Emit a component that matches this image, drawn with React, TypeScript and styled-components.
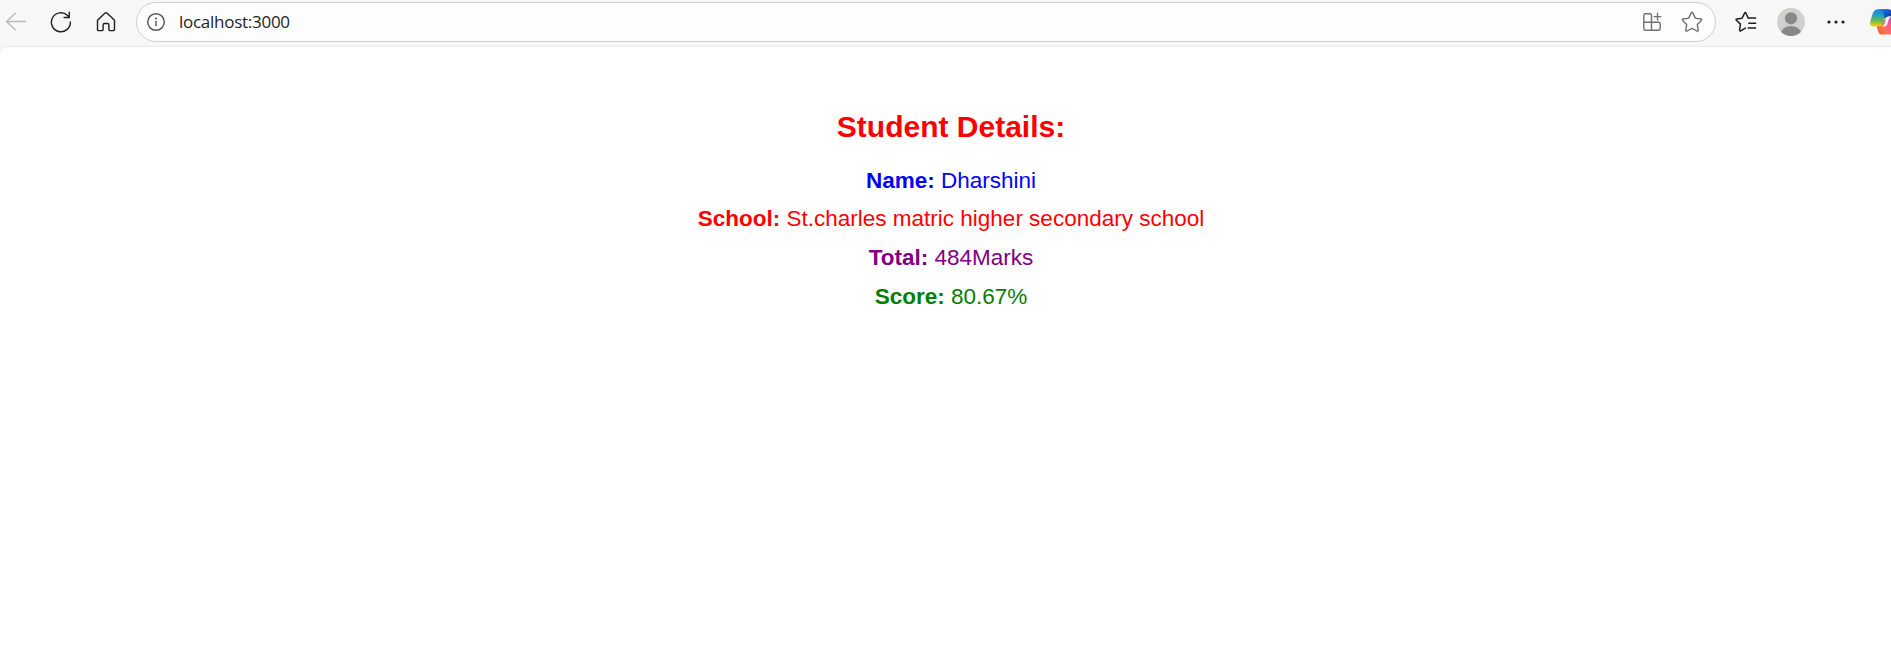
import React from "react";
import styled, { createGlobalStyle } from "styled-components";

const GlobalStyle = createGlobalStyle`
  html, body { margin: 0; padding: 0; background: #f7f7f7; overflow: hidden; }
  *, *::before, *::after { box-sizing: border-box; }
`;

const Window = styled.div`
  display: flex;
  flex-direction: column;
  height: 651px;
  width: 100%;
  overflow: hidden;
  background: #f7f7f7;
`;

const Toolbar = styled.header`
  display: flex;
  align-items: center;
  flex: none;
  height: 46px;
  padding: 0 0 2px 5px;
`;

const IconButton = styled.button<{ $gap?: number; $color?: string }>`
  display: flex;
  flex: none;
  padding: 0;
  border: 0;
  background: none;
  color: ${(p) => p.$color ?? "#1f1f1f"};
  margin-left: ${(p) => p.$gap ?? 0}px;

  svg { display: block; }
`;

const AddressBar = styled.div`
  display: flex;
  align-items: center;
  width: 1580px;
  height: 40px;
  flex: none;
  margin-left: 19px;
  padding: 0 12px 0 9px;
  border: 1px solid #cecece;
  border-radius: 20px;
  background: #fdfdfd;
`;

const Url = styled.span`
  flex: 1;
  margin-left: 13px;
  color: #1f1f1f;
  font: 400 17px/24px "Open Sans", "Noto Sans", sans-serif;
  letter-spacing: -0.27px;
`;

const Page = styled.main`
  flex: 1;
  padding: 62.5px 0 0 11px;
  border-top: 1px solid #e9e9e9;
  border-top-left-radius: 8px;
  background: #fff;
  font-family: Arial, "Liberation Sans", sans-serif;
  text-align: center;
`;

const Heading = styled.h1`
  margin: 0 0 18.3px;
  color: #ff0000;
  font-size: 30px;
  line-height: 34px;
`;

const Detail = styled.p<{ $color: string }>`
  margin: 0;
  color: ${(p) => p.$color};
  font-size: 22.5px;
  line-height: 38.6px;
`;

const stroke = {
  fill: "none",
  stroke: "currentColor",
  strokeWidth: 1.4,
  strokeLinecap: "round" as const,
  strokeLinejoin: "round" as const,
};

const BackIcon = () => (
  <svg width="22" height="22" viewBox="0 0 22 22" {...stroke}>
    <path d="M20.5 10.5H1.5M10.3 2.3 1.5 10.5l8.8 8.3" />
  </svg>
);

const RefreshIcon = () => (
  <svg width="22" height="22" viewBox="0 0 22 22" {...stroke}>
    <path d="M20.4 11A9.5 9.5 0 1 1 17.4 4.3L19.3 6.4M19.3 1.3v5.2h-5.2" />
  </svg>
);

const HomeIcon = () => (
  <svg width="22" height="22" viewBox="0 0 22 22" {...stroke}>
    <path d="M2.5 9.2 10.1 2.1a1.3 1.3 0 0 1 1.8 0l7.6 7.1v9.2a1.2 1.2 0 0 1-1.2 1.2h-3.2a1.2 1.2 0 0 1-1.2-1.2V14a1.5 1.5 0 0 0-1.5-1.5H9.6A1.5 1.5 0 0 0 8.1 14v4.4a1.2 1.2 0 0 1-1.2 1.2H3.7a1.2 1.2 0 0 1-1.2-1.2z" />
  </svg>
);

const InfoIcon = () => (
  <svg width="20" height="20" viewBox="0 0 20 20" {...stroke}>
    <circle cx="10" cy="10" r="8.3" strokeWidth="1.5" />
    <path d="M10 9.4v4" strokeWidth="1.5" />
    <circle cx="10" cy="6.5" r="1" fill="currentColor" stroke="none" />
  </svg>
);

const AppsIcon = () => (
  <svg width="20" height="20" viewBox="0 0 20 20" {...stroke}>
    <path d="M9.5 10.3V3.4a1.6 1.6 0 0 0-1.6-1.6H3.4a1.6 1.6 0 0 0-1.6 1.6v13.2a1.6 1.6 0 0 0 1.6 1.6h13.2a1.6 1.6 0 0 0 1.6-1.6v-4.7a1.6 1.6 0 0 0-1.6-1.6H1.8M9.5 10.3v7.9M12.1 4.6h6.8M15.5 1.2v6.8" />
  </svg>
);

const StarIcon = () => (
  <svg width="22" height="22" viewBox="0 0 22 22" {...stroke}>
    <path d="M10.2 1.9q.8-1.3 1.6 0l2.5 5.2 5.5.9q1.5.3.5 1.4l-4 4 .9 5.7q.1 1.5-1.3.9L11 17.4 6.1 20q-1.4.6-1.3-.9l.9-5.7-4-4Q.7 8.3 2.2 8l5.5-.9z" />
  </svg>
);

const FavoritesIcon = () => (
  <svg width="22" height="22" viewBox="0 0 22 22" {...stroke} strokeWidth={1.5}>
    <path d="M13.2 7.1 11 2.2q-.7-1.3-1.4 0L7.1 7.2l-5.2.7q-1.4.3-.5 1.3l4 3.9-.8 6q0 1.3 1.2.7l4.5-2.7M13.2 7.1h7.4M13.8 12.3h6.8M13.2 17.1h7.4" />
  </svg>
);

const Avatar = () => (
  <svg width="28" height="28" viewBox="0 0 28 28">
    <defs>
      <clipPath id="avatar-clip"><circle cx="14" cy="14" r="14" /></clipPath>
    </defs>
    <g clipPath="url(#avatar-clip)">
      <rect width="28" height="28" fill="#d2d0ce" />
      <circle cx="14" cy="10.3" r="6.1" fill="#8a8886" />
      <ellipse cx="14" cy="26" rx="10.2" ry="8" fill="#8a8886" />
    </g>
  </svg>
);

const MoreIcon = () => (
  <svg width="18" height="6" viewBox="0 0 18 6" fill="currentColor">
    <circle cx="2" cy="3" r="1.6" />
    <circle cx="9" cy="3" r="1.6" />
    <circle cx="16" cy="3" r="1.6" />
  </svg>
);

const CopilotIcon = () => (
  <svg width="32" height="28" viewBox="0 0 32 28">
    <defs>
      <linearGradient id="cp-left" x1="0.45" y1="0" x2="0.4" y2="1">
        <stop offset="0" stopColor="#1685df" />
        <stop offset="0.3" stopColor="#2598cf" />
        <stop offset="0.6" stopColor="#58b35f" />
        <stop offset="1" stopColor="#f2cc12" />
      </linearGradient>
      <linearGradient id="cp-bottom" x1="0" y1="0.8" x2="0.8" y2="0.4">
        <stop offset="0" stopColor="#e8642c" />
        <stop offset="0.35" stopColor="#ff744c" />
        <stop offset="0.7" stopColor="#fa5c86" />
        <stop offset="1" stopColor="#b052e0" />
      </linearGradient>
      <linearGradient id="cp-top" x1="0" y1="0" x2="0.8" y2="0.5">
        <stop offset="0" stopColor="#1c8ee8" />
        <stop offset="1" stopColor="#1243b8" />
      </linearGradient>
    </defs>
    <path d="M7.5 18 12.5 14 21.5 8H27q5.5 0 4 6l-2.5 8q-1.3 4.5-5 4.5H12.5q-2.5 0-3.5-3.5z" fill="url(#cp-bottom)" />
    <path d="M9.5 1.2H19L16.5 8.5l-2.8 7Q12.8 18.5 10 18.5H5q-5 0-3.7-5L3.7 5.5Q5.2 1.2 9.5 1.2z" fill="url(#cp-left)" />
    <path d="M9.5 1.2H19.5q3 0 4 4l.8 3.3H20q-3 0-4 2.2Q14.5 3 9.5 1.2z" fill="url(#cp-top)" />
    <path d="M23 8.500h-2.800q-2.400 0-3.100 2.300l-1.700 5.200q-.8 2.400-3 2.600h2.800q2.300 0 3-2.300l1.700-5.400q.7-2.200 3.100-2.400z" fill="#fff" />
  </svg>
);

const details = [
  { label: "Name:", value: "Dharshini", color: "#0000ff" },
  { label: "School:", value: "St.charles matric higher secondary school", color: "#ff0000" },
  { label: "Total:", value: "484Marks", color: "#800080" },
  { label: "Score:", value: "80.67%", color: "#008000" },
];

export default function App() {
  return (
    <Window>
      <GlobalStyle />
      <Toolbar>
        <IconButton aria-label="Back" $color="#b9b9b9"><BackIcon /></IconButton>
        <IconButton aria-label="Refresh" $gap={23}><RefreshIcon /></IconButton>
        <IconButton aria-label="Home" $gap={23}><HomeIcon /></IconButton>
        <AddressBar>
          <IconButton aria-label="Site information" $color="#5a5a5a"><InfoIcon /></IconButton>
          <Url>localhost:3000</Url>
          <IconButton aria-label="Install app" $color="#707070"><AppsIcon /></IconButton>
          <IconButton aria-label="Add to favorites" $gap={19} $color="#707070"><StarIcon /></IconButton>
        </AddressBar>
        <IconButton aria-label="Favorites" $gap={19}><FavoritesIcon /></IconButton>
        <IconButton aria-label="Profile" $gap={20}><Avatar /></IconButton>
        <IconButton aria-label="More" $gap={22}><MoreIcon /></IconButton>
        <IconButton aria-label="Copilot" $gap={24}><CopilotIcon /></IconButton>
      </Toolbar>
      <Page>
        <Heading>Student Details:</Heading>
        {details.map((d) => (
          <Detail key={d.label} $color={d.color}>
            <strong>{d.label}</strong> {d.value}
          </Detail>
        ))}
      </Page>
    </Window>
  );
}
